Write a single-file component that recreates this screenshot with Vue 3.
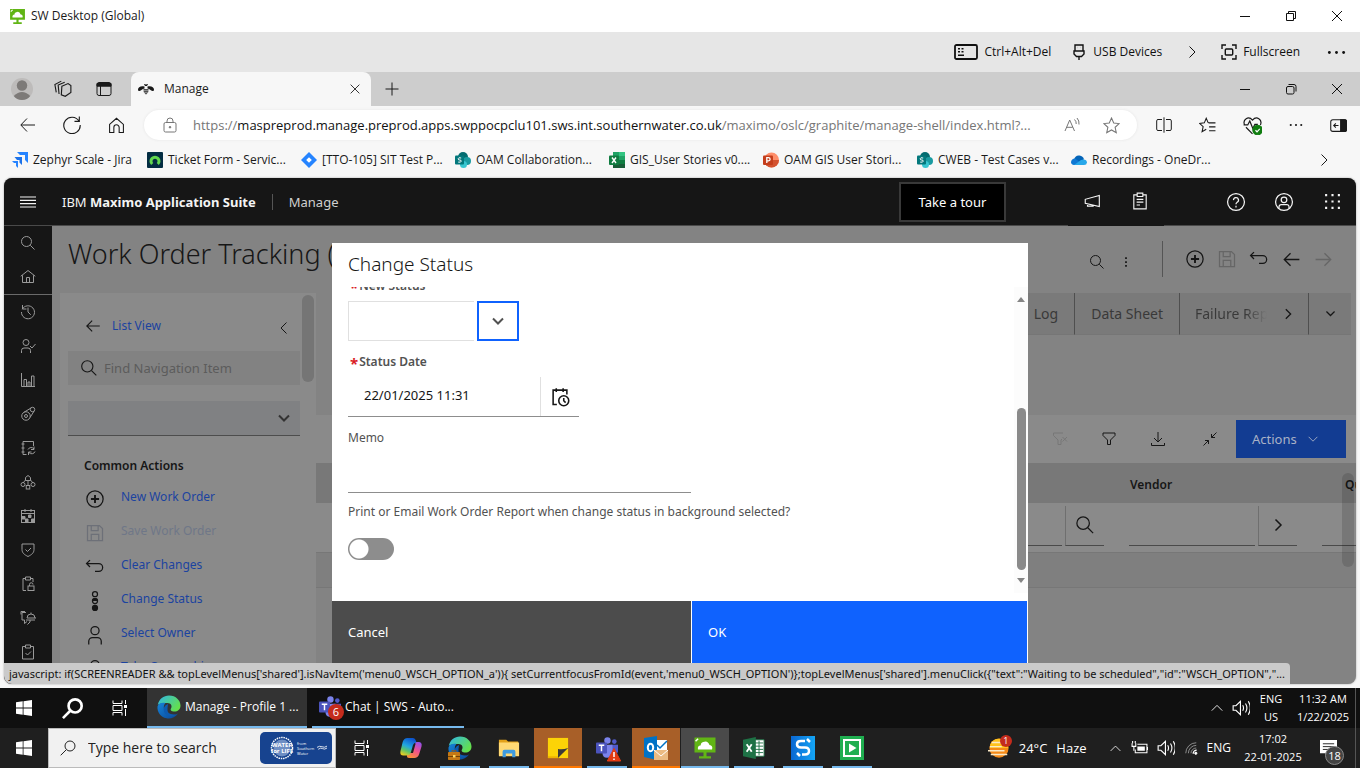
<script setup>
import { h } from 'vue'

const art = {
  // window chrome
  min: '<path d="M3 8.500h10"/>',
  restore: '<path d="M3.500 5.500h7v7h-7zM5.500 5.500v-2h7v7h-2"/>',
  restoreR: '<rect x="3.500" y="5.500" width="7.500" height="7.500" rx="1.500"/><path d="M5.500 3.500h5.500a2 2 0 0 1 2 2v5"/>',
  close: '<path d="M3 3l10 10M13 3L3 13"/>',
  plus: '<path d="M8 1.500v13M1.500 8h13"/>',
  right: '<path d="M5.500 2.500l5.500 5.500-5.500 5.500"/>',
  left: '<path d="M10.500 2.500L5 8l5.500 5.500"/>',
  down: '<path d="M3 5.500l5 5 5-5"/>',
  up: '<path d="M2 11l6-6 6 6"/>',
  dots: '<g fill="currentColor" stroke="none"><circle cx="2" cy="8" r="1.200"/><circle cx="8" cy="8" r="1.200"/><circle cx="14" cy="8" r="1.200"/></g>',
  // browser toolbar
  back: '<path d="M15 8H1M7 1.500L.8 8 7 14.500"/>',
  reload: '<path d="M14.200 4.500A7.300 7.300 0 1 0 15.300 8M14.500 .5v4.300h-4.300"/>',
  house: '<path d="M1.500 7L8 1.200 14.500 7v7.500h-4V9.800a2.500 2.500 0 0 0-5 0v4.700h-4z"/>',
  lock: '<rect x="2" y="5.500" width="12" height="9.500" rx="1.500"/><path d="M5 5.500V4a3 3 0 0 1 6 0v1.500"/><circle cx="8" cy="10.200" r=".8" fill="currentColor"/>',
  read: '<path d="M1 14L5.700 3l4.800 11M2.700 10.300h6M10.500 2.500q2 2 1.700 4.500M13 1q2.500 2.800 2 6.500"/>',
  star: '<path d="M8 1l2.100 4.700 5.100.5-3.800 3.500 1.100 5L8 12.200l-4.500 2.500 1.100-5L.8 6.200l5.100-.5z"/>',
  starlist: '<path d="M8.700 5.500L6.800 1.200 5 5.500.5 6l3.400 3.100-1 4.800L6.800 11.500M9 5.500h6.500M9.500 9.300h6M9.500 13h6"/>',
  split: '<path d="M6 2.500H2a1.300 1.300 0 0 0-1.300 1.300v8.400A1.300 1.300 0 0 0 2 13.500h4M10 2.500h4a1.300 1.300 0 0 1 1.300 1.300v8.400a1.300 1.300 0 0 1-1.300 1.300h-4M8 .3v15.400"/>',
  heart: '<path d="M1.300 7.500C-.5 3 4.500-.5 8 3.500c3.500-4 8.500-.5 6.700 4M2.500 9.500L8 15M.5 7.500H4l1.700-3.300 2.600 6.300 1.700-3.500h2.500"/><circle cx="12.300" cy="11.800" r="4" fill="#107c10" stroke="#107c10"/><path d="M10.500 12l1.300 1.300 2.300-2.500" stroke="#fff"/>',
  sidebar: '<rect x=".7" y="2.500" width="14.600" height="11" rx="2"/><path d="M10 2.500h4.500a1 1 0 0 1 1 1v9a1 1 0 0 1-1 1H10z" fill="currentColor"/><path d="M8 8H3.500M5.500 6L3.500 8l2 2"/>',
  keyboard: '<rect x="1" y="1" width="22" height="14" rx="1.500" stroke-width="1.800"/><g fill="currentColor" stroke="none"><path d="M4 4h2v1.500H4zM7.500 4h2v1.500h-2zM4 7h2v1.500H4zM7.500 7h2v1.500h-2zM4 10.500h6V12H4z"/></g>',
  usb: '<path d="M4 1h8v6H4zM3 7h10v3l-2.500 2.500h-5L3 10zM8 12.500V16M6.500 3.500h.1M9.500 3.500h.1" stroke-width="1.400"/>',
  full: '<path d="M1 5V1h4M11 1h4v4M15 11v4h-4M5 15H1v-4" stroke-width="1.400"/><rect x="4.300" y="5" width="7.400" height="6" rx="1" stroke-width="1.400"/>',
  workspace: '<path d="M7 5.500l5.500-2.300L15 5v6l-5 3.500-3.500-1.300zM4.500 12.500l-.8-8L9.500 2M2 11L.8 4 6.500 1"/>',
  tabs: '<rect x="1" y="1.500" width="14" height="13" rx="2"/><path d="M1 2.500h14v2.700H1z" fill="currentColor"/><path d="M4.500 5v9.500"/>',
  bee: '<g fill="currentColor" stroke="none"><path d="M0 8.500C0 6 3 4.500 6.500 5.500v2C4 7.500 3.500 10 1.500 10 .5 10 0 9.500 0 8.500zM16 8.500C16 6 13 4.500 9.500 5.500v2c2.500 0 3 2.500 5 2.500 1 0 1.500-.5 1.500-1.500zM6 3h1.300l.7 1 .7-1H10L9 5H7zM5.500 8.300h5v1.200h-5zM5.500 10.300h5L10 11.500H6zM6.500 12.200h3L8 13.500z"/></g>',
  profile: '<circle cx="8" cy="8" r="8" fill="#bdbbba" stroke="none"/><g fill="#7d7a78" stroke="none"><circle cx="8" cy="5.500" r="3.800"/><path d="M2 13q6-5.500 12 0-2.200 3-6 3t-6-3z"/></g>',
  // application icons
  menu: '<path d="M0 3h16M0 6.300h16M0 9.600h16M0 13h16" stroke-width="1.200"/>',
  search: '<circle cx="13" cy="13" r="10"/><path d="M20.500 20.500L29 29"/>',
  home: '<path d="M1.500 14.500L16 3l14.500 11.500M5 12.500V27h22V12.500M13 27V17h6v10"/>',
  recent: '<path d="M4.500 10.500A13 13 0 1 1 3 16M5 2v8h8M16 7v9l5.500 5.500"/>',
  usercheck: '<circle cx="12" cy="9" r="6"/><path d="M3 30v-5a5 5 0 0 1 5-5h8a5 5 0 0 1 5 5v5M20 16l4 4 7-8"/>',
  chart: '<path d="M3 2v27h27M8 29V15h5v14M16 29v-9h4v9M23 29V8h5v21"/>',
  tool: '<circle cx="12" cy="20" r="8.500"/><circle cx="12" cy="20" r="3"/><path d="M8 12.500L22 4M20 23l8-12.500"/><circle cx="25" cy="7" r="4.500"/>',
  book: '<path d="M27 12V3H6v26h7M3 8h6M3 16h6M3 24h6M16 19a7 7 0 0 1 12-1M28 13v6h-6M30 23a7 7 0 0 1-12 2M17 30v-6h6"/>',
  nodes: '<path d="M16 3l5 4v6H11V7zM16 13v9M11 12l-5 6M21 12l5 6"/><circle cx="6" cy="21" r="4"/><circle cx="26" cy="21" r="4"/><rect x="12.500" y="23" width="7" height="7"/>',
  calendar: '<rect x="3" y="5" width="26" height="24"/><path d="M3 11h26M10 2v6M22 2v6"/><path d="M4 17h6v5H4zM11 22h5v6h-5zM17 14h5v5h-5zM23 22h5v6h-5z" fill="currentColor"/>',
  shield: '<path d="M4 4h24v11c0 7-5 10.500-12 14C9 25.500 4 22 4 15zM11 15l4 4 7-7"/>',
  cliplock: '<path d="M12 29H6V5h5M21 5h5v7M11 2h10v6H11z"/><rect x="16" y="20" width="12" height="9"/><path d="M19 20v-3a3.500 3.500 0 0 1 7 0"/>',
  asset: '<path d="M12 5H4v15h5v7l5-4M2 9V3h8M14 16a8 8 0 0 1 16 0zM22 8V5M12 20h18M20 20v4l-5 5M30 16h2"/>',
  clipcheck: '<path d="M11 5H5v25h22V5h-6M11 2h10v6H11zM11 18l4 4 7-7"/>',
  add: '<circle cx="16" cy="16" r="13"/><path d="M16 9.500v13M9.500 16h13" stroke-width="3"/>',
  save: '<path d="M4 4h19l5 5v19H4zM10 4v8h11V4M10 28V18h12v10"/>',
  undo: '<path d="M8 5l-5.500 5.500L8 16M3 10.500h19a6 6 0 0 1 0 12.500H16"/>',
  aleft: '<path d="M28 16H5M14.500 6.500L5 16l9.500 9.500"/>',
  aright: '<path d="M4 16h23M17.500 6.500L27 16l-9.500 9.500"/>',
  status: '<circle cx="16" cy="5" r="4"/><circle cx="16" cy="16" r="4"/><path d="M12 16a4 4 0 0 1 8 0" fill="currentColor"/><circle cx="16" cy="27" r="4" fill="currentColor"/>',
  user: '<circle cx="16" cy="9" r="6.500"/><path d="M6 31v-5a6 6 0 0 1 6-6h8a6 6 0 0 1 6 6v5"/>',
  kebab: '<g fill="currentColor" stroke="none"><path d="M14 5h4v4h-4zM14 14h4v4h-4zM14 23h4v4h-4z"/></g>',
  filter: '<path d="M4 4h24v5l-9 9v9h-6v-9L4 9z"/>',
  filterx: '<path d="M22 4H3v5l9 9v9h6v-9l2-2M21 12l9 9M30 12l-9 9"/>',
  download: '<path d="M16 2v19M8 14l8 8 8-8M3 24v5h26v-5"/>',
  shrink: '<path d="M29 3L19 13M19 6v7h7M3 29l10-10M6 19h7v7"/>',
  mega: '<path d="M29 6v20L4 20v-7zM8 21v4h10v-2"/>',
  clip: '<path d="M11 5H5v25h22V5h-6M11 2h10v6H11zM10 13h12M10 18h12M10 23h6"/>',
  help: '<circle cx="16" cy="16" r="13.500"/><path d="M12 13a4 4 0 1 1 5.500 3.700c-1.200.6-1.500 1-1.500 2.800M16 22v2.600"/>',
  account: '<circle cx="16" cy="16" r="13.500"/><circle cx="16" cy="12.500" r="4.500"/><path d="M8 26v-2.500a3.500 3.500 0 0 1 3.500-3.500h9a3.500 3.500 0 0 1 3.500 3.500V26"/>',
  apps: '<g fill="currentColor" stroke="none"><path d="M2 2h4v4H2zM14 2h4v4h-4zM26 2h4v4h-4zM2 14h4v4H2zM14 14h4v4h-4zM26 14h4v4h-4zM2 26h4v4H2zM14 26h4v4h-4zM26 26h4v4h-4z"/></g>',
  datetime: '<path d="M11 28H5V5h22v7M10 2v6M21 2v6" stroke-width="2.500"/><circle cx="22" cy="22" r="8" stroke-width="2.500"/><path d="M22 17.500V22l3 3" stroke-width="2.500"/>',
  // marks
  cloudpc: '<g stroke="none"><path d="M1 1h14v10H1zM7 11h2v3H7zM4 13.500h8V15H4z" fill="#61b515"/><path d="M3.300 9h9.400q.8-2.600-1.700-3-1.200-3.400-4.200-2Q5 4.500 5.200 6.200 2.800 6.500 3.300 9z" fill="#fff"/></g><path d="M1.700 3.500l1.700-1.700" stroke="#fff"/>',
  zephyr: '<g stroke="none"><path d="M5 0h11v11l-3-3V3H8z" fill="#2684ff"/><path d="M2.500 5H10v8l-2.500-2.500V8H5z" fill="#1d72e8"/><path d="M0 9h6v7l-2-2v-3H2z" fill="#2684ff"/></g>',
  ticket: '<rect width="16" height="16" rx="1" fill="#032d42" stroke="none"/><path d="M5.200 12a4 4 0 1 1 5.600 0" stroke="#62d84e" stroke-width="3"/>',
  jira: '<path d="M8 0l8 8-8 8-8-8z" fill="#2684ff" stroke="none"/><path d="M8 5.200L10.800 8 8 10.800 5.200 8z" fill="#fff" stroke="none"/>',
  sharepoint: '<g stroke="none"><circle cx="8" cy="5" r="5" fill="#036c70"/><circle cx="12" cy="9" r="4" fill="#1a9ba1"/><circle cx="8.500" cy="12.500" r="3.500" fill="#37c6d0"/><rect y="3.500" width="9" height="9" rx="1" fill="#03787c"/></g><path d="M6.200 6q-3-.8-3 .7t1.500 1.300T6.200 9.200t-3 .9" stroke="#fff"/>',
  excelfile: '<g stroke="none"><path d="M4 0h12v16H4z" fill="#21a366"/><path d="M10 0h6v4h-6z" fill="#33c481"/><path d="M4 8h6v8H4zM10 12h6v4h-6z" fill="#185c37"/><path d="M10 8h6v4h-6z" fill="#107c41"/><rect y="3.500" width="10" height="9.500" rx="1" fill="#107c41"/></g><path d="M3 5.500l4 5.500M7 5.500L3 11" stroke="#fff" stroke-width="1.400"/>',
  ppt: '<g stroke="none"><circle cx="8.500" cy="8" r="7.500" fill="#ff8f6b"/><path d="M1 8h15a7.500 7.500 0 0 1-15 0z" fill="#d35230"/><rect y="3.500" width="10" height="9.500" rx="1" fill="#c43e1c"/></g><path d="M3.800 11V5.700h1.700q1.600 0 1.600 1.500T5.500 8.800H4" stroke="#fff" stroke-width="1.300"/>',
  onedrive: '<g stroke="none"><path d="M3 8q1-5 5.500-4.500 3.500.5 4.500 3.800L8 11z" fill="#0364b8"/><path d="M0 10q.5-3.500 4-3.500l9 6.500H3q-3-.3-3-3z" fill="#0f78d4"/><path d="M3 13l7-5q5.500-1.500 6 2.500-.3 2.500-3 2.500z" fill="#28a8ea"/></g>',
  edge: '<defs><linearGradient id="eg1" x1="0" y1="0" x2="1" y2=".6"><stop stop-color="#2fb6ea"/><stop offset="1" stop-color="#64e04c"/></linearGradient><linearGradient id="eg2" x1="0" y1="0" x2="1" y2="1"><stop stop-color="#1583d8"/><stop offset="1" stop-color="#0b4796"/></linearGradient></defs><g stroke="none"><path d="M.8 10C2 4 6.500.5 12 .5c7 0 11.500 5 11.500 10 0 4-3 6-6 6-3.500 0-4.500-1.500-3.500-3 1.500-2.500 0-5.500-3.500-5.500C6 8 2 8.500.8 10z" fill="url(#eg1)"/><path d="M.5 11.500C1 8.500 5 7 8.500 8 5.500 10.500 5.800 19 15 20q3 .2 6-1.500C18 23 13.500 24 9.500 23.300 3.500 22 0 17 .5 11.500z" fill="url(#eg2)"/><path d="M11 9q-5.500 2-4 7.500c1 4 7 6.500 12.500 2.800q-10 1.200-9-6z" fill="#0d5bb0"/></g>',
  brief: '<g stroke="none"><rect y="2" width="12" height="8" rx=".8" fill="#c57814"/><path d="M0 6h12v1H0z" fill="#704107"/><rect x="5" y="5" width="2.500" height="2.500" fill="#ffd45c"/></g><path d="M4 2V.8h4V2" stroke="#9a5a10"/>',
  teams: '<g stroke="none"><circle cx="12.500" cy="3.800" r="3.500" fill="#7b83eb"/><circle cx="20" cy="5" r="2.500" fill="#5059c9"/><path d="M16 8.500h8v7q-1 5-5 4z" fill="#5059c9"/><path d="M7 8.500h11v8q-1 6-6 6t-5-6z" fill="#7b83eb"/><rect y="6" width="12" height="12" rx="1" fill="#4b53bc"/></g><path d="M3 9h6M6 9v6.500" stroke="#fff" stroke-width="1.600"/>',
  warn: '<path d="M7 .5L13.700 13H.3z" fill="#e33b12" stroke="#e33b12"/><path d="M7 4v5M7 10.500v1.500" stroke="#fff" stroke-width="1.500"/>',
  win: '<path d="M0 2.300L6.700 1.300v6.300H0zM7.500 1.200L16 0v7.600H7.500zM0 8.400h6.700v6.300L0 13.700zM7.500 8.400H16V16l-8.500-1.200z" fill="#fff" stroke="none"/>',
  find: '<circle cx="10" cy="6" r="5"/><path d="M6.300 9.700L.7 15.300"/>',
  taskview: '<path d="M1 .5v3h9v-3M1 15.500v-3h9v3M1 5.500h9v5H1zM13.500 0v4M13.500 9v7"/><path d="M12 5h3v3h-3z" fill="currentColor" stroke="none"/>',
  copilot: '<defs><linearGradient id="cp1" x1=".6" y1="0" x2=".2" y2="1"><stop stop-color="#0c55cf"/><stop offset=".45" stop-color="#22a7e0"/><stop offset=".7" stop-color="#5cc46a"/><stop offset="1" stop-color="#f5cf1d"/></linearGradient><linearGradient id="cp2" x1=".8" y1="0" x2=".3" y2="1"><stop stop-color="#9350ea"/><stop offset=".5" stop-color="#f0508f"/><stop offset="1" stop-color="#fb8f3a"/></linearGradient></defs><g stroke="none"><path d="M16 6h3.500q4 0 3 4.500L20.200 18q-1.200 4-5 4h-5q-3 0-2-3.500L11 17h3L16.500 8z" fill="url(#cp2)"/><path d="M8.500 2h5.500q2.200 0 2.800 2.500l.6 2q-2.600 0-3.400 2.500l-2 7q-1 3.500-4 3.500H4.500q-4 0-3-4.500L3.700 6Q5 2 8.500 2z" fill="url(#cp1)"/></g>',
  folder: '<g stroke="none"><path d="M1 3h8l2 2h11v15H1z" fill="#e3a21a"/><path d="M1 6h22v15H1z" fill="#ffd974"/><path d="M5 22v-6q0-2 2-2h10q2 0 2 2v6h-3.500v-4h-7v4z" fill="#3e9be0"/></g>',
  sticky: '<path d="M1 1h22v22H1z" fill="#fcd307" stroke="none"/><path d="M23 12v11H12V13q5 1 11-1z" fill="#3b3a39" stroke="none"/><path d="M12 23L23 12v11z" fill="#fcd307" stroke="none"/><path d="M1 23h11v-2H1z" fill="#f0b400" stroke="none"/>',
  outlook: '<g stroke="none"><path d="M12 4h11v13H12z" fill="#fff"/><path d="M0 2l13-2v24L0 21z" fill="#0072c6"/></g><ellipse cx="6.500" cy="11.500" rx="2.700" ry="3.700" stroke="#fff" stroke-width="2"/><path d="M13 9l3 3 7-7" stroke="#0072c6" stroke-width="1.500"/><path d="M10 14h14v10H10z" fill="#ebbb82" stroke="none"/><path d="M10 14l7 6 7-6" stroke="#fff"/>',
  excel: '<path d="M12 3h11v18H12z" fill="#fff" stroke="#1e7145"/><path d="M13 6.500h9M13 10h9M13 13.500h9M13 17h9M17.500 4v16" stroke="#1e7145"/><path d="M0 3l14-3v24L0 21z" fill="#1e7145" stroke="none"/><path d="M4 8l5.500 8M9.500 8L4 16" stroke="#fff" stroke-width="2"/>',
  snote: '<defs><linearGradient id="sn"><stop stop-color="#0a67d2"/><stop offset="1" stop-color="#14a5f5"/></linearGradient></defs><path d="M0 0h24v24H0z" fill="url(#sn)" stroke="none"/><path d="M14 5h-4q-4 0-4 3.200T10 11.500h4q4 0 4 3.500t-4 3.500h-3" stroke="#fff" stroke-width="2.500"/><path d="M16 3l3 3M6 17l3 3" stroke="#fff" stroke-width="2.500"/>',
  play: '<path d="M0 0h24v24H0z" fill="#1fae50" stroke="none"/><path d="M4 4h16v16H4z" stroke="#fff" stroke-width="2"/><path d="M9 7.500l7.500 4.500L9 16.500z" fill="#fff" stroke="none"/>',
  sound: '<path d="M1 6h2.500L7.500 2v12L3.500 10H1zM9.500 5.500q1.500 2.500 0 5M12 4q2.500 4 0 8M14.500 2q3.500 6 0 12"/>',
  battery: '<path d="M6 4h9v8H4V9" /><path d="M6 6h7v4H6zM15 6.500h1.500v3H15z" fill="currentColor" stroke="none"/><path d="M1 3v3h3.500V3M2.700 6v4M1.500 1v2M4 1v2"/>',
  wifi: '<path d="M2 14A12 12 0 0 1 14 2M5 14a9 9 0 0 1 9-9M8 14a6 6 0 0 1 6-6" stroke="#999"/><path d="M10.500 14.500a4 4 0 0 1 4-4" stroke-width="1.500"/><circle cx="13.500" cy="14" r="1.300" fill="#fff"/>',
  haze: '<g stroke="none"><circle cx="12" cy="12" r="10.500" fill="#f58a18"/><path d="M2.500 8A10.500 10.500 0 0 1 22 9v3H2z" fill="#ffc21c"/></g><path d="M4 6h12M2 10.500h13M0 15h18M3 19h18" stroke="#fbe9c6" stroke-width="1.600"/>',
  note: '<path d="M0 1h18v14h-9l-3 4v-4H0z" fill="#fff" stroke="none"/><path d="M3 5h12M3 8h12M3 11h8" stroke="#222"/>',
  water: '<circle cx="12" cy="12" r="10.500" stroke="#fff" stroke-width="1.500" stroke-dasharray="1.500 .8"/><circle cx="12" cy="12" r="8.500" fill="#6f8fc4" stroke="none"/>',
  wave: '<path d="M0 5q4-3 8-1t8-1M2 8q4-3 7-1t7-1" stroke="#fff" stroke-width="1.300"/>',
}

const grid32 = new Set('search home recent usercheck chart tool book nodes calendar shield cliplock asset clipcheck add save undo aleft aright status user kebab filter filterx download shrink mega clip help account apps datetime'.split(' '))
const grid24 = new Set('edge teams copilot folder sticky outlook excel snote play haze water'.split(' '))
const special = { keyboard: '0 0 24 16', brief: '0 0 12 10', warn: '0 0 14 14', note: '0 0 18 20', wave: '0 0 16 12' }

const Icon = ({ n, s = 16 }) => {
  const box = special[n] || (grid32.has(n) ? '0 0 32 32' : grid24.has(n) ? '0 0 24 24' : '0 0 16 16')
  const [, , w, hgt] = box.split(' ').map(Number)
  return h('svg', {
    viewBox: box, width: s, height: Math.round((s * hgt) / w), fill: 'none', stroke: 'currentColor',
    'stroke-width': grid32.has(n) ? 2 : 1, 'aria-hidden': 'true', innerHTML: art[n],
  })
}
Icon.props = ['n', 's']

const bookmarks = [
  ['zephyr', 'Zephyr Scale - Jira'], ['ticket', 'Ticket Form - Servic...'], ['jira', '[TTO-105] SIT Test P...'],
  ['sharepoint', 'OAM Collaboration...'], ['excelfile', 'GIS_User Stories v0....'], ['ppt', 'OAM GIS User Stori...'],
  ['sharepoint', 'CWEB - Test Cases v...'], ['onedrive', 'Recordings - OneDr...'],
]
const rail = ['search', 'home', 'recent', 'usercheck', 'chart', 'tool', 'book', 'nodes', 'calendar', 'shield', 'cliplock', 'asset', 'clipcheck']
const actions = [
  ['add', 'New Work Order'], ['save', 'Save Work Order', true], ['undo', 'Clear Changes'],
  ['status', 'Change Status'], ['user', 'Select Owner'], ['user', 'Take Ownership'],
]
const pinned = [
  ['taskview', 16, ''], ['copilot', 24, ''], ['edge', 24, 'run', 'brief', 12], ['folder', 22, 'run'],
  ['sticky', 22, 'alert'], ['teams', 22, 'run', 'warn', 14], ['outlook', 24, 'alert'], ['cloudpc', 24, 'run active'],
  ['excel', 22, 'run'], ['snote', 24, 'run'], ['play', 24, 'run'],
]
</script>

<template>
  <div class="screen">
    <header class="titlebar">
      <Icon n="cloudpc" :s="17" />
      <span class="grow">SW Desktop (Global)</span>
      <button class="win" aria-label="Minimise"><Icon n="min" /></button>
      <button class="win" aria-label="Restore"><Icon n="restore" /></button>
      <button class="win" aria-label="Close"><Icon n="close" /></button>
    </header>

    <div class="session">
      <button><Icon n="keyboard" :s="24" />Ctrl+Alt+Del</button>
      <button class="usb"><Icon n="usb" />USB Devices</button>
      <button class="more" aria-label="More devices"><Icon n="right" /></button>
      <button class="fs"><Icon n="full" />Fullscreen</button>
      <button class="dots" aria-label="More"><Icon n="dots" :s="19" /></button>
    </div>

    <div class="tabstrip">
      <div class="tabtools">
        <button aria-label="Profile"><Icon n="profile" :s="22" /></button>
        <button aria-label="Workspaces"><Icon n="workspace" :s="18" /></button>
        <button aria-label="Tab actions"><Icon n="tabs" /></button>
      </div>
      <div class="tab"><Icon n="bee" /><span class="grow">Manage</span><button aria-label="Close tab"><Icon n="close" :s="14" /></button></div>
      <button class="newtab" aria-label="New tab"><Icon n="plus" /></button>
      <span class="grow"></span>
      <button class="win" aria-label="Minimise"><Icon n="min" /></button>
      <button class="win" aria-label="Restore"><Icon n="restoreR" /></button>
      <button class="win" aria-label="Close"><Icon n="close" /></button>
    </div>

    <div class="toolbar">
      <button aria-label="Back"><Icon n="back" /></button>
      <button aria-label="Reload"><Icon n="reload" :s="18" /></button>
      <button aria-label="Home"><Icon n="house" :s="17" /></button>
      <div class="address">
        <Icon n="lock" />
        <a class="url" href="#">https://<b>maspreprod.manage.preprod.apps.swppocpclu101.sws.int.southernwater.co.uk</b>/maximo/oslc/graphite/manage-shell/index.html?...</a>
        <button aria-label="Read aloud"><Icon n="read" /></button>
        <button aria-label="Favourite"><Icon n="star" :s="17" /></button>
      </div>
      <div class="tools">
        <button aria-label="Split screen"><Icon n="split" /></button>
        <button aria-label="Favourites"><Icon n="starlist" :s="17" /></button>
        <button aria-label="Essentials"><Icon n="heart" :s="19" /></button>
        <button aria-label="Settings"><Icon n="dots" :s="14" /></button>
        <button aria-label="Sidebar"><Icon n="sidebar" :s="17" /></button>
      </div>
    </div>

    <nav class="bookmarks" aria-label="Bookmarks">
      <a v-for="([icon, label], i) in bookmarks" :key="i" href="#"><Icon :n="icon" /><span>{{ label }}</span></a>
      <button aria-label="More bookmarks"><Icon n="right" /></button>
    </nav>

    <div class="frame">
      <main class="app">
        <header class="suite">
          <button class="burger" aria-label="Menu"><Icon n="menu" /></button>
          <span class="brand">IBM <b>Maximo Application Suite</b></span>
          <span class="product">Manage</span>
          <span class="grow"></span>
          <button class="tour">Take a tour</button>
          <div class="mid">
            <button aria-label="Announcements"><Icon n="mega" :s="18" /></button>
            <button aria-label="Tasks"><Icon n="clip" :s="18" /></button>
          </div>
          <button class="sq" aria-label="Help"><Icon n="help" :s="20" /></button>
          <button class="sq" aria-label="Account"><Icon n="account" :s="20" /></button>
          <button class="sq" aria-label="Apps"><Icon n="apps" :s="17" /></button>
        </header>

        <div class="work">
          <nav class="rail" aria-label="Modules">
            <button v-for="name in rail" :key="name" :aria-label="name"><Icon :n="name" /></button>
          </nav>
          <section class="page">
            <div class="pagehead">
              <h1>Work Order Tracking (SP)</h1>
              <span class="grow"></span>
              <div class="finders">
                <button aria-label="Search"><Icon n="search" /></button>
                <button aria-label="Options"><Icon n="kebab" :s="14" /></button>
              </div>
              <div class="cmds">
                <button aria-label="New"><Icon n="add" :s="20" /></button>
                <button class="off" aria-label="Save"><Icon n="save" :s="20" /></button>
                <button aria-label="Undo"><Icon n="undo" :s="20" /></button>
                <button aria-label="Previous"><Icon n="aleft" :s="21" /></button>
                <button class="off" aria-label="Next"><Icon n="aright" :s="21" /></button>
              </div>
            </div>
            <div class="columns">
              <aside class="panel">
                <div class="listview"><Icon n="aleft" :s="18" /><a href="#">List View</a><span class="grow"></span><button aria-label="Collapse"><Icon n="left" /></button></div>
                <label class="find"><Icon n="search" :s="18" /><input type="text" placeholder="Find Navigation Item" aria-label="Find Navigation Item"></label>
                <div class="pick"><select aria-label="Saved queries"><option></option></select><Icon n="down" /></div>
                <h2>Common Actions</h2>
                <ul>
                  <li v-for="[icon, label, off] in actions" :key="label" :class="{ off }"><Icon :n="icon" :s="20" /><a href="#">{{ label }}</a></li>
                </ul>
                <div class="thumb"></div>
              </aside>
              <div class="detail">
                <div class="tabs" role="tablist">
                  <button role="tab">Log</button>
                  <button role="tab">Data Sheet</button>
                  <button role="tab" class="cut"><span>Failure Rep</span><Icon n="right" :s="14" /></button>
                  <button role="tab" class="pull" aria-label="All tabs"><Icon n="down" :s="13" /></button>
                </div>
                <div class="tablebar">
                  <button class="off" aria-label="Clear filter"><Icon n="filterx" /></button>
                  <button aria-label="Filter"><Icon n="filter" /></button>
                  <button class="dl" aria-label="Download"><Icon n="download" /></button>
                  <button aria-label="Collapse"><Icon n="shrink" /></button>
                  <button class="primary">Actions<Icon n="down" :s="14" /></button>
                </div>
                <table>
                  <colgroup><col><col class="c2"><col class="c3"></colgroup>
                  <thead><tr><th></th><th>Vendor</th><th class="qty">Quantity</th></tr></thead>
                  <tbody>
                    <tr>
                      <td><div class="field first"><input type="text" aria-label="Item"><button aria-label="Look up"><Icon n="search" :s="20" /></button></div></td>
                      <td><div class="field"><input type="text" aria-label="Vendor"><button aria-label="Go"><Icon class="mid-weight" n="right" /></button></div></td>
                      <td><div class="field"><input type="text" aria-label="Quantity"></div></td>
                    </tr>
                    <tr class="blank"><td colspan="3"></td></tr>
                  </tbody>
                </table>
                <div class="thumb"></div>
              </div>
            </div>
          </section>
        </div>

        <form class="dialog" role="dialog" aria-labelledby="dlg" @submit.prevent>
          <h2 id="dlg">Change Status</h2>
          <div class="body">
            <div class="fields">
              <label for="ns"><i>*</i>New Status</label>
              <div class="combo"><input id="ns" type="text"><button type="button" aria-label="Choose status"><Icon n="down" /></button></div>
              <label for="sd"><i>*</i>Status Date</label>
              <div class="date"><input id="sd" type="text" value="22/01/2025 11:31"><button type="button" aria-label="Pick date"><Icon n="datetime" :s="20" /></button></div>
              <label class="plain" for="memo">Memo</label>
              <textarea id="memo"></textarea>
              <label class="plain wide" for="pr">Print or Email Work Order Report when change status in background selected?</label>
              <input id="pr" class="toggle" type="checkbox" role="switch">
            </div>
            <div class="scroll"><i class="tri up"></i><i class="bar"></i><i class="tri dn"></i></div>
          </div>
          <footer><button type="button">Cancel</button><button class="ok" type="submit">OK</button></footer>
        </form>
        <div class="hint">javascript: if(SCREENREADER &amp;&amp; topLevelMenus['shared'].isNavItem('menu0_WSCH_OPTION_a')){ setCurrentfocusFromId(event,'menu0_WSCH_OPTION')};topLevelMenus['shared'].menuClick({"text":"Waiting to be scheduled","id":"WSCH_OPTION","...</div>
      </main>
    </div>

    <div class="taskbar remote">
      <button class="cell" aria-label="Start"><Icon n="win" /></button>
      <button class="cell" aria-label="Search"><Icon class="bold" n="find" :s="21" /></button>
      <button class="cell" aria-label="Task view"><Icon n="taskview" /></button>
      <button class="open current"><Icon n="edge" :s="24" /><span>Manage - Profile 1 ...</span></button>
      <button class="open chat"><span class="badged"><Icon n="teams" :s="22" /><em>6</em></span><span>Chat | SWS - Auto...</span></button>
      <span class="grow"></span>
      <Icon n="up" :s="14" /><Icon n="sound" :s="18" />
      <span class="stack lang">ENG<br>US</span>
      <span class="stack">11:32 AM<br>1/22/2025</span>
      <span class="peek"></span>
    </div>

    <div class="taskbar local">
      <button class="cell" aria-label="Start"><Icon n="win" /></button>
      <label class="searchbox"><Icon n="find" /><input type="text" placeholder="Type here to search" aria-label="Type here to search">
        <span class="promo"><span class="seal"><Icon n="water" :s="24" /><b>WATER<br>for LIFE</b></span><small>from<br>Southern<br>Water</small><Icon n="wave" :s="10" /></span>
      </label>
      <div class="pins">
        <button v-for="[icon, size, kind, over, os] in pinned" :key="icon" class="cell" :class="kind" :aria-label="icon">
          <Icon :n="icon" :s="size" /><Icon v-if="over" class="over" :class="over" :n="over" :s="os" />
        </button>
      </div>
      <span class="grow"></span>
      <span class="badged weather"><Icon n="haze" :s="22" /><em>1</em></span>
      <span class="temp">24°C</span><span class="temp haze">Haze</span>
      <div class="tray"><Icon n="up" :s="13" /><Icon n="battery" :s="17" /><Icon n="sound" :s="18" /><Icon n="wifi" :s="14" /></div>
      <span class="lang">ENG</span>
      <span class="stack">17:02<br>22-01-2025</span>
      <span class="badged notes"><Icon n="note" :s="17" /><em>18</em></span>
      <span class="peek"></span>
    </div>
  </div>
</template>

<style>
body { background: #f7f7f7; overflow: hidden; }
</style>

<style scoped>
* { box-sizing: border-box; }
.screen { display: flex; flex-direction: column; height: 100vh; font: 12px/16px "Open Sans", "Noto Sans", sans-serif; color: #1a1a1a; }
.app { font-family: "Noto Sans", "Open Sans", sans-serif; }
button { font: inherit; color: inherit; background: none; border: 0; padding: 0; display: flex; align-items: center; justify-content: center; }
input, select, textarea { font: inherit; color: inherit; background: none; border: 0; border-radius: 0; padding: 0; min-width: 0; outline: 0; }
a { color: inherit; text-decoration: none; }
svg { flex: none; display: block; }
.grow { flex: 1; }
h1, h2, ul { margin: 0; padding: 0; font-weight: 400; }

.titlebar { height: 32px; flex: none; background: #fff; display: flex; align-items: center; gap: 5px; padding-left: 9px; }
.win { width: 46px; height: 100%; color: #111; }
.titlebar .win { margin-left: -5px; }
.titlebar .win:first-of-type { margin-left: 0; }

.session { height: 40px; flex: none; background: #e6e6e6; display: flex; align-items: center; justify-content: flex-end; padding-right: 14px; }
.session button { gap: 6px; color: #111; }
.usb { margin-left: 20px; }
.more { margin-left: 22px; }
.fs { margin-left: 21px; }
.dots { margin-left: 27px; }

.tabstrip { height: 34px; flex: none; background: #cdcdcd; display: flex; }
.tabtools { width: 131px; display: flex; padding-left: 1px; }
.tabtools button { width: 41px; }
.tab { width: 240px; background: #f7f7f7; border-radius: 8px 8px 0 0; display: flex; align-items: center; padding: 0 9px 0 7px; gap: 10px; }
.newtab { width: 42px; }

.toolbar { height: 38px; flex: none; display: flex; align-items: center; padding: 0 13px 0 20px; }
.toolbar > button { width: 16px; margin-right: 28px; }
.toolbar > button:nth-child(3) { margin-right: 20px; }
.address { flex: 1; min-width: 0; height: 30px; background: #fff; border-radius: 15px; box-shadow: 0 0 3px #e4e4e4; display: flex; align-items: center; padding: 0 17px 0 18px; color: #767676; }
.url { flex: 1; min-width: 0; white-space: nowrap; overflow: hidden; margin-left: 15px; font-size: 13px; line-height: 20px; }
.url b { font-weight: 400; color: #111; }
.address button { margin-left: 23px; }
.tools { display: flex; align-items: center; margin-left: 19px; gap: 27px; }

.bookmarks { height: 34px; flex: none; display: flex; align-items: center; padding: 0 28px 2px 12px; }
.bookmarks a { display: flex; gap: 5px; align-items: center; width: 154px; white-space: nowrap; }
.bookmarks a:first-child { width: 135px; }
.bookmarks button { margin-left: auto; }

.frame { flex: 1; min-height: 0; padding: 0 4px 4px; }
.app { position: relative; height: 100%; border-radius: 8px; overflow: hidden; display: flex; flex-direction: column; background: #838383; box-shadow: 0 0 2px #999; font-size: 12px; }

.suite { height: 48px; flex: none; background: #161616; color: #f4f4f4; display: flex; align-items: center; border-bottom: 1px solid #4a4a4a; }
.burger { width: 48px; }
.brand { margin-left: 10px; font-size: 13px; padding-right: 16px; border-right: 1px solid #555; }
.brand b { font-weight: 700; }
.product { margin-left: 16px; font-size: 13px; color: #d0d0d0; }
.tour { width: 107px; height: 40px; background: #000; border: 2px solid #393939; font-size: 13px; color: #fff; }
.mid { display: flex; height: 48px; margin: 0 48px 0 62px; border-bottom: 1px solid #161616; }
.mid button, .sq { width: 48px; }

.work { flex: 1; min-height: 0; display: flex; }
.rail { width: 48px; flex: none; background: #161616; color: #9a9a9a; overflow: hidden; }
.rail button { width: 100%; height: 34px; }
.rail button:nth-child(2) { height: 35px; border-bottom: 1px solid #6a6a6a; }
.page { flex: 1; min-width: 0; display: flex; flex-direction: column; color: #161616; }
.pagehead { height: 67px; flex: none; display: flex; padding: 0 23px 0 16px; }
h1 { font-size: 27px; line-height: 56px; font-weight: 300; white-space: nowrap; }
.finders { display: flex; align-items: center; gap: 14px; padding: 4px 29px 0 0; }
.cmds { display: flex; align-items: center; gap: 12px; height: 36px; margin-top: 15px; padding-left: 22px; border-left: 1px solid #555; }
.cmds button { width: 20px; }
.off { color: #666; }
.columns { flex: 1; min-height: 0; display: flex; padding-left: 8px; }
.panel { position: relative; width: 256px; flex: none; background: #8a8a8a; padding: 15px 16px 0 8px; overflow: hidden; }
.panel a { color: #1b43a0; font-size: 12px; }
.listview { height: 36px; display: flex; align-items: center; padding: 0 8px 0 16px; gap: 10px; }
.listview button { stroke-width: 2; padding-top: 3px; }
.find { height: 34px; margin-top: 7px; background: #828282; display: flex; align-items: center; padding-left: 12px; gap: 6px; }
.find input { flex: 1; font-size: 13px; }
.find input::placeholder { color: #5c5c5c; opacity: 1; }
.pick { height: 35px; margin-top: 16px; background: #808183; border-bottom: 1px solid #4d4d4d; display: grid; align-items: center; }
.pick > * { grid-area: 1 / 1; }
.pick select { width: 100%; height: 34px; appearance: none; }
.pick svg { justify-self: end; margin-right: 8px; stroke-width: 2; color: #333; pointer-events: none; }
.panel h2 { margin: 16px 0 0 16px; line-height: 28px; font-weight: 600; font-size: 12px; }
ul { list-style: none; }
li { display: flex; align-items: center; height: 34px; padding-left: 17px; gap: 16px; }
li svg { margin-top: 3px; }
li.off { color: #6d7078; }
.panel li.off a { color: #6f7788; }
.thumb { position: absolute; width: 12px; border-radius: 6px; background: #757575; }
.panel .thumb { right: 2px; top: 2px; height: 87px; }
.detail { position: relative; flex: 1; min-width: 0; }
.detail .thumb { right: 2px; top: 180px; height: 94px; background: #00000022; }
.tabs { display: flex; justify-content: flex-end; height: 42px; margin-right: 5px; color: #393939; }
.tabs button { background: #7a7a7a; border-right: 1px solid #4f4f4f; padding: 0 16px; font-size: 14px; border-bottom: 1px solid #767676; }
.tabs .cut { width: 129px; justify-content: space-between; padding: 0 13px 0 15px; }
.cut span { width: 72px; text-align: left; overflow: hidden; background: linear-gradient(90deg, #393939 70%, #7a7a7a 100%); background-clip: text; color: transparent; white-space: nowrap; }
.tabs .pull { width: 42px; border-right: 0; }
.tabs svg { color: #161616; stroke-width: 1.5; }
.tablebar { margin-top: 80px; height: 48px; background: #8a8a8a; display: flex; align-items: center; justify-content: flex-end; padding-right: 10px; gap: 33px; }
.tablebar .off { color: #777; }
.tablebar .dl { margin-right: 3px; }
.tablebar .primary { width: 110px; height: 38px; background: #123c92; color: #a9b2c6; justify-content: flex-start; padding-left: 16px; gap: 9px; font-size: 13px; margin-left: -15px; }
table { width: 100%; table-layout: fixed; border-collapse: collapse; background: #8a8a8a; }
.c2 { width: 193px; }
.c3 { width: 50px; }
th { height: 40px; background: #787878; font-size: 12px; font-weight: 600; text-align: left; padding: 3px 0 0 17px; overflow: hidden; white-space: nowrap; }
th.qty { padding-left: 39px; }
td { height: 49px; padding: 0 0 3px 16px; overflow: hidden; border-bottom: 1px solid #777; }
.field { display: flex; gap: 3px; height: 40px; padding-right: 9px; }
.field input { flex: 1; border-bottom: 1px solid #4a4a4a; }
.field button { width: 39px; border-left: 1px solid #6f6f6f; border-bottom: 1px solid #4a4a4a; }
.mid-weight { stroke-width: 1.5; }
td:last-child .field { padding: 0; }
.blank td { height: 35px; background: #7f7f7f; }

.dialog { position: absolute; top: 65px; left: 0; right: 0; margin: 0 auto; width: 696px; max-width: 90%; background: #fff; color: #161616; }
.dialog h2 { height: 44px; line-height: 42px; padding-left: 16px; font-size: 19px; font-weight: 300; }
.body { height: 314px; overflow: hidden; display: flex; }
.fields { flex: 1; display: flex; flex-direction: column; justify-content: flex-end; padding: 0 16px 41px; }
.fields > * { flex: none; }
label { display: block; line-height: 18px; }
.fields label { font-size: 12px; font-weight: 600; color: #525252; margin-bottom: 6px; }
.fields label i { color: #da1e28; font-style: normal; font-weight: 700; font-size: 15px; line-height: 12px; vertical-align: -3px; margin: 0 1px 0 2px; }
.fields .plain { font-weight: 400; margin-bottom: 1px; }
.fields .wide { margin-bottom: 17px; }
.combo { display: flex; width: 171px; height: 40px; gap: 3px; margin-bottom: 12px; }
.combo input { flex: 1; border: 1px solid #e0e0e0; border-right: 0; }
.combo button { width: 42px; border: 2px solid #0f62fe; color: #525252; }
.combo svg { stroke-width: 2; }
.date { display: flex; width: 231px; height: 40px; border-bottom: 1px solid #8d8d8d; margin-bottom: 12px; }
.date input { flex: 1; padding: 0 0 3px 16px; font-size: 13px; }
.date button { width: 39px; border-left: 1px solid #e0e0e0; }
.fields textarea { width: 343px; height: 45px; resize: none; border-bottom: 1px solid #8d8d8d; margin-bottom: 10px; }
.toggle { appearance: none; width: 46px; height: 22px; margin: 0; border-radius: 11px; background: radial-gradient(circle at 11px 11px, #fff 9px, #8d8d8d 10px); }
.scroll { width: 14px; height: 306px; background: #fcfcfc; display: flex; flex-direction: column; align-items: center; padding: 10px 0; }
.tri { border: 4px solid transparent; flex: none; }
.up { border-bottom: 5px solid #858585; border-top: 0; }
.dn { border-top: 5px solid #858585; border-bottom: 0; margin-top: 8px; }
.bar { width: 9px; border-radius: 5px; background: #8a8a8a; height: 162px; margin-top: auto; }
footer { height: 62px; display: grid; grid-template-columns: 1fr 335px; column-gap: 1px; padding-right: 1px; }
footer button { justify-content: flex-start; padding-left: 16px; background: #4c4c4c; color: #fff; font-size: 13px; }
footer .ok { background: #0f62fe; }

.hint { position: absolute; left: 0; bottom: 0; max-width: 98%; height: 21px; line-height: 21px; padding: 0 5px; background: #cacaca; border-top-right-radius: 4px; white-space: nowrap; overflow: hidden; font-size: 11px; color: #111; }

.taskbar { height: 40px; flex: none; display: flex; align-items: center; background: #101010; color: #fff; }
.taskbar button { height: 40px; }
.local { background: #1f1f1f; }
.cell { position: relative; width: 48px; flex: none; }
.bold { stroke-width: 2; }
.open { width: 160px; justify-content: flex-start; padding-left: 10px; gap: 4px; font-size: 12px; white-space: nowrap; border-bottom: 2px solid #76b9ed; }
.remote .cell + .open { margin-left: 3px; }
.current { background: #333; }
.chat { width: 152px; margin-left: 5px; padding-left: 7px; }
.badged { position: relative; }
.badged em { position: absolute; font-style: normal; text-align: center; border-radius: 50%; background: #c42b1c; }
.chat em { width: 16px; height: 16px; left: 9px; top: 8px; font-size: 11px; line-height: 16px; }
.stack { width: 62px; text-align: center; line-height: 18px; font-size: 11px; white-space: nowrap; }
.remote > svg + svg { margin-left: 8px; }
.remote .lang { width: 42px; }
.peek { width: 5px; height: 40px; border-left: 1px solid #555; margin-left: 1px; }

.searchbox { width: 288px; height: 40px; background: #f1f1f1; border: 1px solid #bbb; display: flex; align-items: center; padding: 0 3px 0 11px; gap: 12px; color: #222; }
.searchbox input { flex: 1; font-size: 14px; }
.searchbox input::placeholder { color: #222; opacity: 1; }
.promo { width: 72px; height: 32px; background: #17438f; border-radius: 5px; display: flex; align-items: center; padding-left: 10px; gap: 3px; color: #fff; }
.seal { position: relative; }
.seal b { position: absolute; inset: 6px 0 0 0; font-size: 6px; line-height: 6px; text-align: center; white-space: nowrap; }
.promo small { font-size: 4px; line-height: 5px; }
.pins { display: flex; gap: 1px; margin-left: 2px; }
.run::after, .alert::after { content: ""; position: absolute; left: 4px; right: 4px; bottom: 0; height: 2px; background: #76b9ed; }
.alert { background: #a85f28; }
.alert::after { left: 0; right: 0; background: #ff7800; }
.active { background: #4a4a4a; }
.active::after { left: 0; right: 0; }
.over { position: absolute; }
.brief { left: 12px; top: 22px; }
.warn { left: 24px; top: 20px; }
.weather em { width: 12px; height: 12px; right: -2px; top: -2px; font-size: 9px; line-height: 12px; }
.temp { font-size: 13px; margin-left: 9px; }
.haze { margin-right: 22px; }
.tray { display: flex; align-items: center; gap: 9px; margin-right: 9px; }
.local .stack { margin-left: 8px; width: 68px; }
.notes { margin: 0 17px 0 13px; }
.notes em { width: 19px; height: 19px; left: 5px; top: 7px; background: #444; border: 1px solid #888; font-size: 11px; line-height: 17px; }
</style>
